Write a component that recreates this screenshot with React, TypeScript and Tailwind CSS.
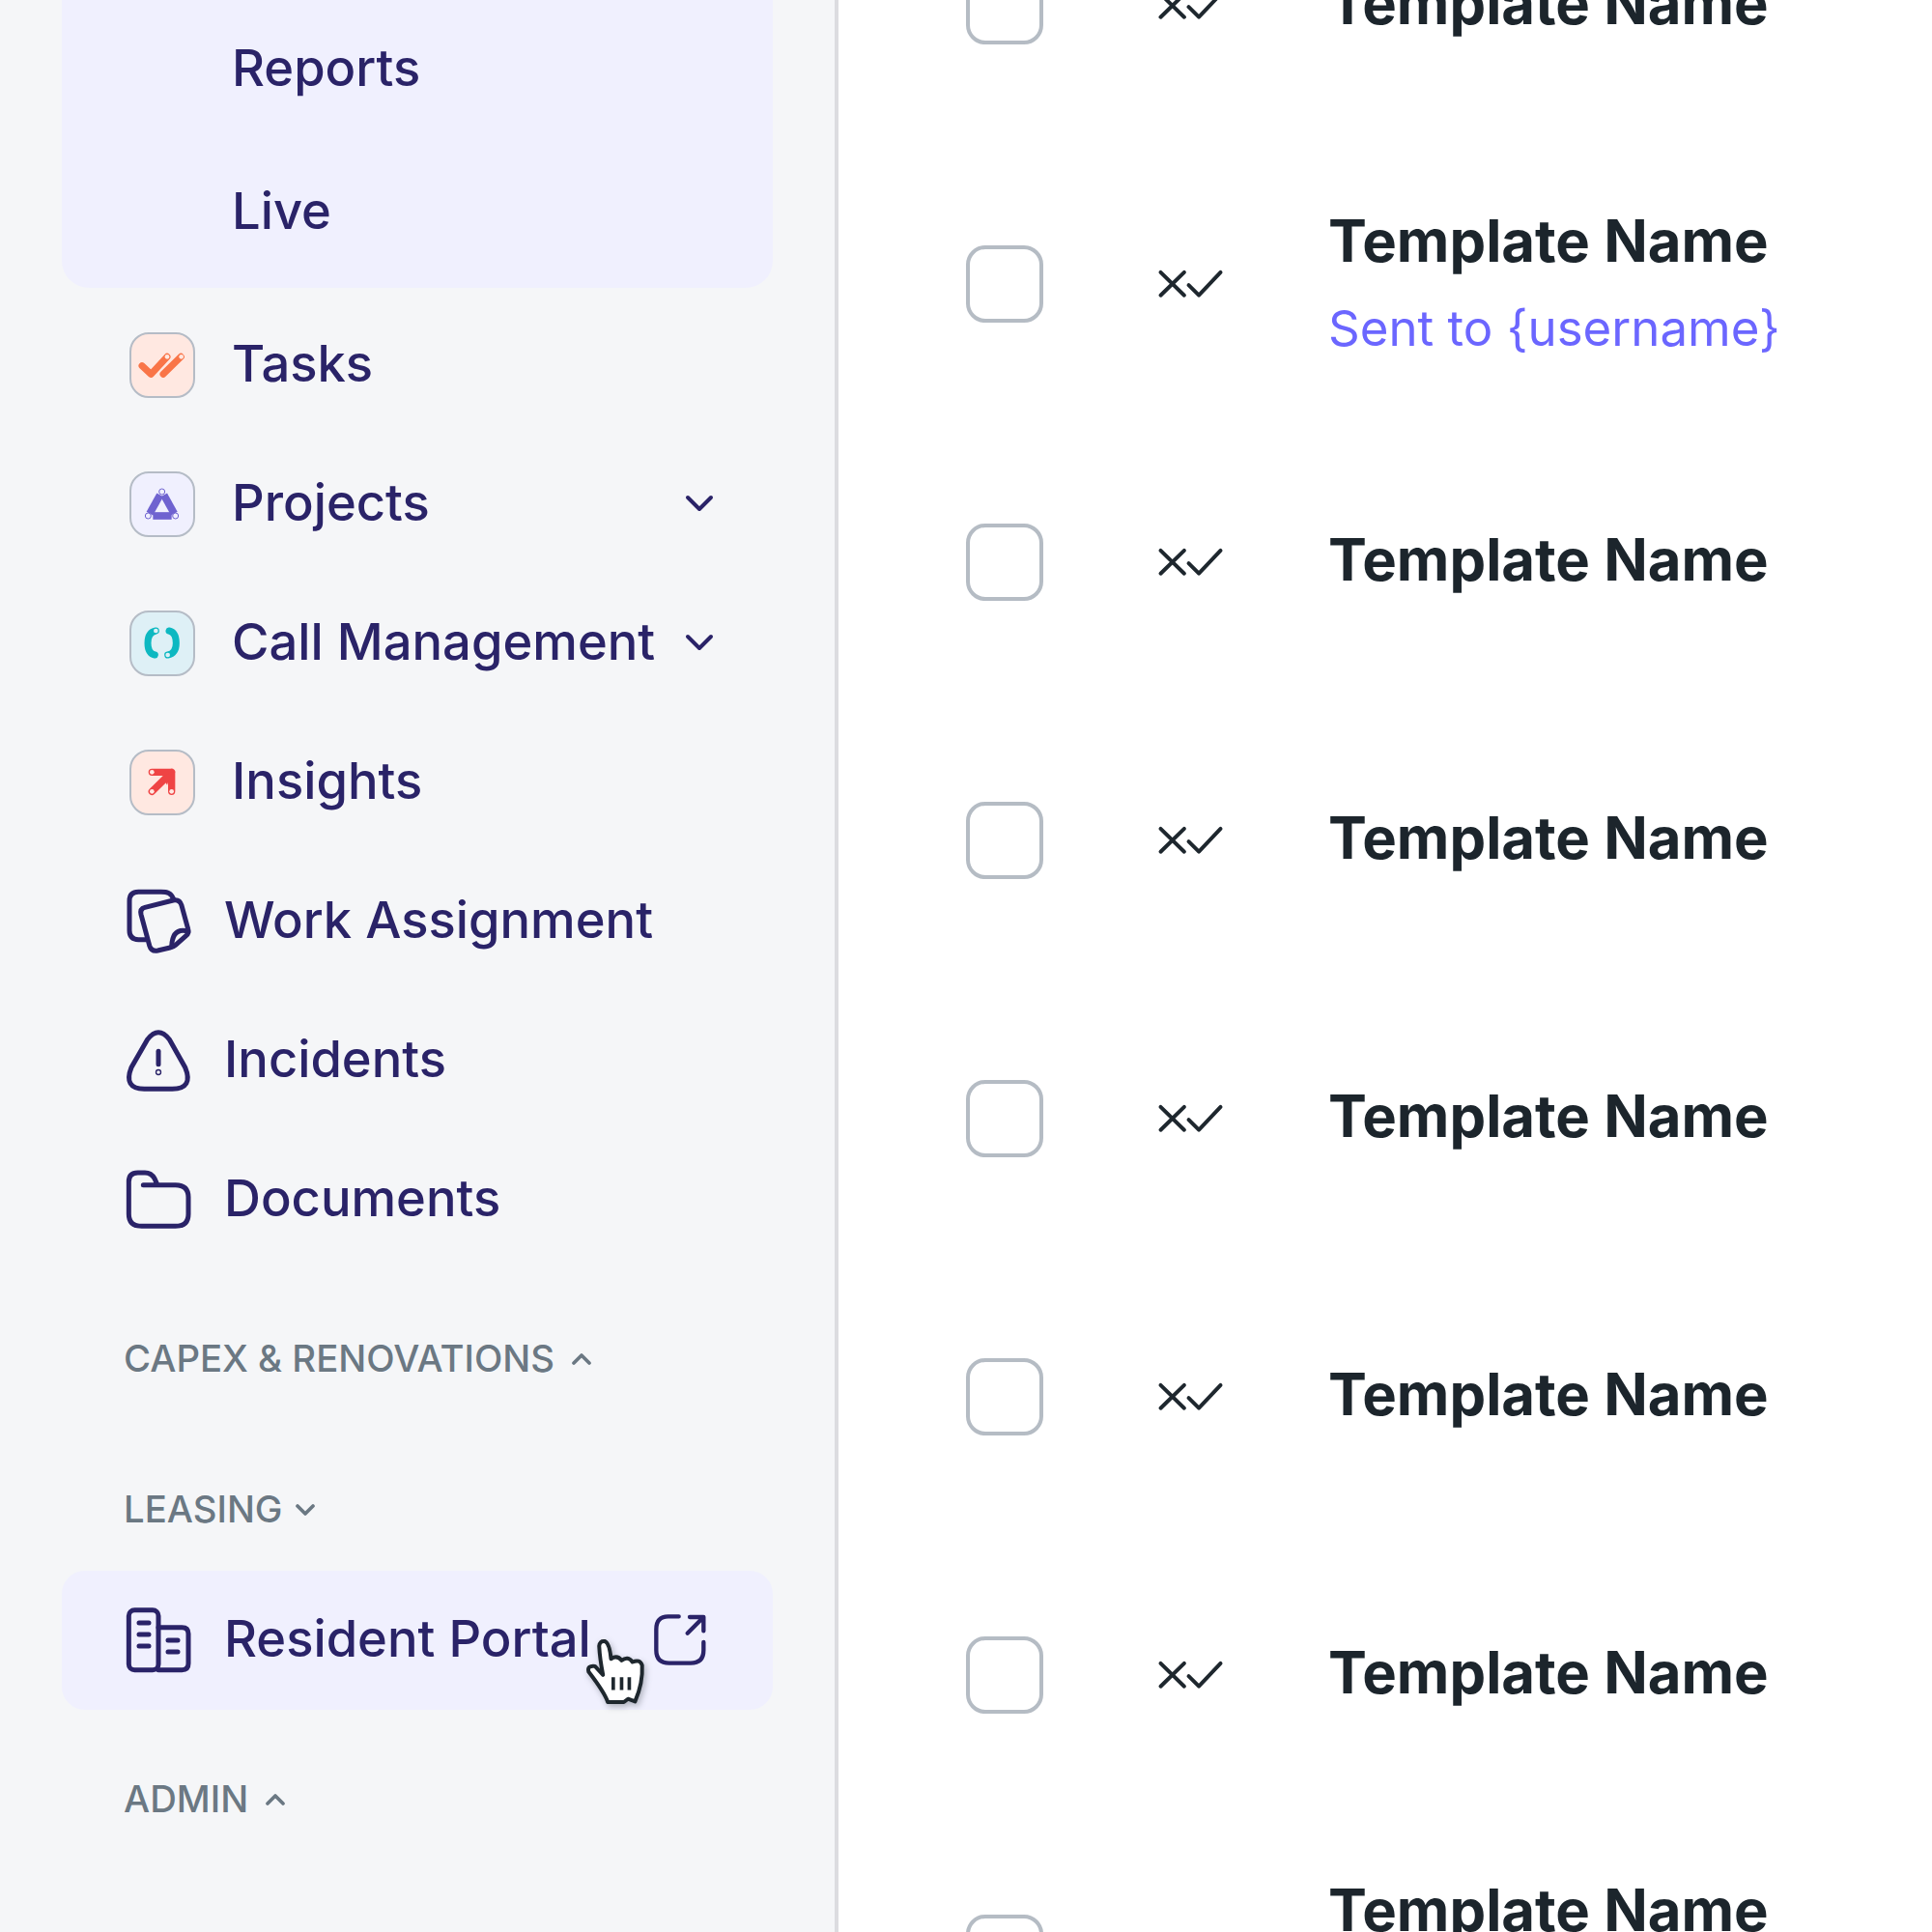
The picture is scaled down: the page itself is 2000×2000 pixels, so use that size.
const navy = '#2a2368';

const Chevron = ({ up = false, small = false }: { up?: boolean; small?: boolean }) => (
    <svg
        viewBox="0 0 30 18"
        className={small ? 'w-[20px] h-[12px]' : 'w-[30px] h-[18px]'}
        fill="none"
        stroke="currentColor"
        strokeWidth={small ? 5.5 : 4}
        strokeLinecap="round"
        strokeLinejoin="round"
    >
        <polyline points={up ? '3,15 15,3 27,15' : '3,3 15,15 27,3'} />
    </svg>
);

const Tile = ({ bg, view, children }: { bg: string; view: string; children: React.ReactNode }) => (
    <div className={`w-[68px] h-[68px] ml-[6px] mr-[38px] rounded-[20px] border-2 border-[#b5bcc6] shrink-0 ${bg}`}>
        <svg viewBox={view} className="w-[64px] h-[64px]">{children}</svg>
    </div>
);

const Line = ({ view, children }: { view: string; children: React.ReactNode }) => (
    <svg viewBox={view} className="w-[72px] h-[72px] mr-[32px] shrink-0" fill="none" stroke={navy} strokeWidth="15" strokeLinecap="round" strokeLinejoin="round">
        {children}
    </svg>
);

const NavRow = ({ icon, label, chevron }: { icon: React.ReactNode; label: string; chevron?: boolean }) => (
    <div className="h-[144px] flex items-center pl-[128px] pr-[125px]">
        {icon}
        <span className="text-[52.5px] leading-[64px] font-medium text-[#2a2368] -mt-[5px] whitespace-nowrap">{label}</span>
        {chevron && <span className="ml-auto -mt-[3px] text-[#2a2368]"><Chevron /></span>}
    </div>
);

const SectionLabel = ({ label, up, className }: { label: string; up?: boolean; className: string }) => (
    <div className={`h-[60px] flex items-center pl-[128px] text-[38.3px] font-medium text-[#6b7883] ${className}`}>
        <span>{label}</span>
        <Chevron up={up} small />
    </div>
);

const Row = ({ sub }: { sub?: boolean }) => (
    <div className="h-[288px] flex items-center pl-[132px]">
        <div className="w-[80px] h-[80px] rounded-[20px] border-4 border-[#b5bcc4] shrink-0" />
        <svg viewBox="650 110 212 100" className="w-[71px] h-[33px] ml-[117px] -mt-[1px] shrink-0" fill="none" stroke="#1e272e" strokeWidth="12" strokeLinecap="round" strokeLinejoin="round">
            <path d="M662 125 L736 197 M736 125 L662 197" />
            <path d="M750 165 L782 197 L850 125" />
        </svg>
        <div className={`ml-[107px] ${sub ? '-mt-[4px]' : '-mt-[6px]'}`}>
            <div className="text-[59.8px] leading-[72px] font-bold text-[#1c252c] whitespace-nowrap">Template Name</div>
            {sub && <div className="text-[51px] leading-[64px] mt-[23px] text-[#6b66ff] whitespace-nowrap">Sent to {'{username}'}</div>}
        </div>
    </div>
);

export default function App() {
    return (
        <div className="w-[2000px] h-[2000px] overflow-hidden flex bg-white" style={{ fontFamily: 'Inter, "Liberation Sans", sans-serif' }}>
            <aside className="w-[868px] h-[2000px] shrink-0 overflow-hidden bg-[#f5f6f8] border-r-4 border-[#dcdce0]">
                <div className="-mt-[24px] ml-[64px] w-[736px] pt-[20px] pb-[6px] rounded-b-[28px] bg-[#f0f0fe]">
                    <div className="h-[148px] flex items-center pl-[176px] text-[52.5px] font-medium text-[#2a2368]">Reports</div>
                    <div className="h-[148px] flex items-center pl-[176px] text-[52.5px] font-medium text-[#2a2368]">Live</div>
                </div>
                <div className="mt-[8px]">
                    <NavRow
                        label="Tasks"
                        icon={
                            <Tile bg="bg-[#ffe8e1]" view="79 78 192 192">
                                <g fill="none" stroke="#f97548" strokeWidth="21" strokeLinecap="round" strokeLinejoin="round">
                                    <path d="M112 176 L140 202 L190 148" />
                                    <path d="M178 202 L233 148" />
                                </g>
                                <circle cx="190" cy="148" r="7" fill="#ffe8e1" />
                                <circle cx="234" cy="148" r="7" fill="#ffe8e1" />
                            </Tile>
                        }
                    />
                    <NavRow
                        label="Projects"
                        chevron
                        icon={
                            <Tile bg="bg-[#f0f0fe]" view="79 511 192 192">
                                <g fill="none" stroke="#6f63d0" strokeWidth="23">
                                    <path d="M168 578 L136 636" />
                                    <path d="M180 578 L212 636" />
                                    <path d="M146 643 L204 643" />
                                </g>
                                <g fill="#f0f0fe" stroke="#6f63d0" strokeWidth="3">
                                    <circle cx="174" cy="568" r="9" />
                                    <circle cx="131" cy="643" r="9" />
                                    <circle cx="216" cy="643" r="9" />
                                </g>
                            </Tile>
                        }
                    />
                    <NavRow
                        label="Call Management"
                        chevron
                        icon={
                            <Tile bg="bg-[#def0f6]" view="79 43 192 192">
                                <g fill="none" stroke="#0db8c1" strokeWidth="21" strokeLinecap="round">
                                    <path d="M155 100 Q130 105 130 138 Q130 170 152 175" />
                                    <path d="M192 175 Q218 170 218 138 Q218 105 196 100" />
                                </g>
                                <circle cx="155" cy="100" r="7" fill="#def0f6" />
                                <circle cx="192" cy="175" r="7" fill="#def0f6" />
                            </Tile>
                        }
                    />
                    <NavRow
                        label="Insights"
                        icon={
                            <Tile bg="bg-[#ffe8e1]" view="79 476 192 192">
                                <path d="M143 540 H204 V600 M204 540 L143 600" fill="none" stroke="#ef4444" strokeWidth="22" strokeLinecap="round" strokeLinejoin="round" />
                                <path d="M175 555 L204 540 L190 580 Z" fill="#ef4444" />
                                <circle cx="143" cy="540" r="7" fill="#ffe8e1" />
                                <circle cx="143" cy="600" r="7" fill="#ffe8e1" />
                                <circle cx="204" cy="600" r="7" fill="#ffe8e1" />
                            </Tile>
                        }
                    />
                    <NavRow
                        label="Work Assignment"
                        icon={
                            <Line view="54 54 216 216">
                                <path d="M208 90 C200 72 190 70 170 70 H100 Q72 70 72 98 V190 Q72 218 100 218 H122" />
                                <path d="M120 118 L208 96 Q228 92 234 112 L254 185 Q258 198 248 206 L215 235 Q208 241 198 243 L160 252 Q140 256 134 236 L108 140 Q104 122 120 118 Z" />
                                <path d="M203 240 Q205 190 238 190 Q250 190 254 195" />
                            </Line>
                        }
                    />
                    <NavRow
                        label="Incidents"
                        icon={
                            <Line view="54 486 216 216">
                                <path d="M128 528 Q162 484 196 528 L245 615 Q272 680 205 682 H118 Q52 680 78 615 Z" />
                                <path d="M162 565 V605" />
                                <circle cx="162" cy="630" r="2" />
                            </Line>
                        }
                    />
                    <NavRow
                        label="Documents"
                        icon={
                            <Line view="54 918 216 216">
                                <path d="M115 980 H215 Q255 980 255 1018 V1070 Q255 1108 215 1108 H110 Q70 1108 70 1070 V970 Q70 942 98 942 H120 Q140 942 150 960 L158 978" />
                            </Line>
                        }
                    />
                </div>
                <SectionLabel label="CAPEX & RENOVATIONS" up className="mt-[63px] gap-[18px]" />
                <SectionLabel label="LEASING" className="mt-[96px] -mb-[1px] gap-[14px]" />
                <div className="relative mt-[34px] ml-[64px] w-[736px] h-[144px] rounded-[24px] bg-[#f0f0fe] flex items-center pl-[64px] pr-[63px]">
                    <Line view="84 126 216 216">
                        <rect x="100" y="140" width="92" height="186" rx="18" />
                        <path d="M192 194 H265 Q285 194 285 214 V306 Q285 326 265 326 H192" />
                        <path d="M132 180 H162 M132 216 H162 M132 252 H162 M222 234 H252 M222 270 H252" />
                    </Line>
                    <span className="text-[52.5px] leading-[64px] font-medium text-[#2a2368] -mt-[5px]">Resident Portal</span>
                    <svg viewBox="315 66 216 216" className="w-[72px] h-[72px] ml-auto" fill="none" stroke={navy} strokeWidth="13" strokeLinecap="round" strokeLinejoin="round">
                        <path d="M428 100 H395 Q358 100 358 140 V205 Q358 245 398 245 H465 Q505 245 505 205 V180" />
                        <path d="M455 152 L505 102 M462 102 H505 V145" />
                    </svg>
                    <svg viewBox="130 165 200 220" className="absolute left-[540px] top-[68px] w-[67px] h-[73px] drop-shadow-[2px_3px_3px_rgba(30,39,46,0.3)]">
                        <path d="M178 195 Q180 178 195 180 Q210 185 215 235 Q235 222 248 240 Q268 225 282 245 Q305 235 312 255 Q315 310 290 368 L268 360 L255 370 L205 370 Q195 340 145 275 Q140 255 165 258 L190 285 Q180 235 178 195 Z" fill="#fff" stroke="#1e272e" strokeWidth="12" strokeLinejoin="round" />
                        <path d="M222 292 V332 M248 292 V332 M272 292 V332" stroke="#1e272e" strokeWidth="11" />
                    </svg>
                </div>
                <SectionLabel label="ADMIN" up className="mt-[63px] gap-[18px]" />
            </aside>
            <main className="flex-1 h-[2000px] overflow-hidden">
                <div className="-mt-[138px]">
                    <Row />
                    <Row sub />
                    <Row />
                    <Row />
                    <Row />
                    <Row />
                    <Row />
                    <Row sub />
                </div>
            </main>
        </div>
    );
}
